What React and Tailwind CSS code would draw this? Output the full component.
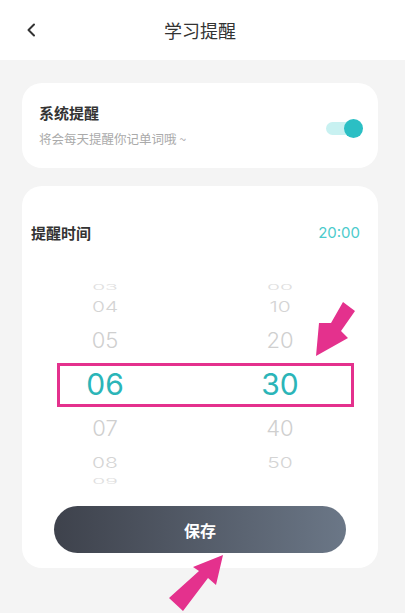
import React from "react";

const sans = { fontFamily: '"Noto Sans CJK SC", "Noto Sans", sans-serif' };
const num = { fontFamily: 'Inter, "Noto Sans", sans-serif' };

function Row({ h, m, height, size, color, scale, weight = "font-light" }) {
  return (
    <div className={`flex items-center ${height}`}>
      <div className={`ml-[23px] w-[120px] flex justify-center ${size} ${color} ${weight}`} style={num}>
        <span className={`inline-block leading-none ${scale}`}>{h}</span>
      </div>
      <div className={`ml-[55px] w-[120px] flex justify-center ${size} ${color} ${weight}`} style={num}>
        <span className={`inline-block leading-none ${scale}`}>{m}</span>
      </div>
    </div>
  );
}

export default function App() {
  return (
    <div className="relative w-[405px] h-[613px] overflow-hidden bg-[#f4f4f4]" style={sans}>
      {/* Header */}
      <div className="h-[60px] bg-white flex items-center relative">
        <div className="w-[60px] h-full flex items-center pl-[26px]">
          <svg width="10" height="14" viewBox="0 0 10 14" fill="none">
            <path d="M8 1.5 L2.5 7 L8 12.5" stroke="#333" strokeWidth="2" strokeLinecap="round" strokeLinejoin="round" />
          </svg>
        </div>
        <div className="flex-1 text-center text-[18px] text-[#333] -ml-[60px] pr-[5px]">学习提醒</div>
      </div>

      {/* Card 1 */}
      <div className="ml-[22px] mr-[27px] mt-[23px] bg-white rounded-[20px] pt-[20px] pb-[20px] pl-[17px] pr-[15px] flex items-center">
        <div className="flex-1">
          <div className="h-[20px] leading-[20px] text-[15px] font-bold text-[#333]">系统提醒</div>
          <div className="mt-[7px] h-[18px] leading-[18px] text-[12.5px] text-[#aaa]">将会每天提醒你记单词哦 ~</div>
        </div>
        <div className="flex items-center mt-[6px]">
          <div className="w-[26px] h-[13px] rounded-full bg-[#c8f1f1] -mr-[8px]" />
          <div className="w-[19px] h-[19px] rounded-full bg-[#2bbfc4]" />
        </div>
      </div>

      {/* Card 2 */}
      <div className="ml-[22px] mr-[27px] mt-[18px] bg-white rounded-[20px] pt-[37px] pb-[15px]">
        <div className="flex items-center justify-between pl-[9px] pr-[18px] h-[20px]">
          <div className="text-[15px] font-bold text-[#333]">提醒时间</div>
          <div className="text-[15px] text-[#4ccbcc]" style={num}>20:00</div>
        </div>

        <div className="mt-[37px] flex flex-col">
          <Row h="03" m="00" height="h-[14px]" size="text-[21px]" color="text-[#dedede]" scale="scale-y-[0.35]" />
          <Row h="04" m="10" height="h-[24px]" size="text-[21px]" color="text-[#d4d4d4]" scale="scale-y-[0.7]" />
          <Row h="05" m="20" height="h-[44px]" size="text-[22px]" color="text-[#cfcfcf]" scale="scale-y-[0.95]" />
          <Row h="06" m="30" height="h-[44px]" size="text-[30px]" color="text-[#2bb5b8]" scale="" weight="font-normal" />
          <Row h="07" m="40" height="h-[44px]" size="text-[22px]" color="text-[#cfcfcf]" scale="scale-y-[0.95]" />
          <Row h="08" m="50" height="h-[24px]" size="text-[21px]" color="text-[#d4d4d4]" scale="scale-y-[0.7]" />
          <Row h="09" m="" height="h-[14px]" size="text-[21px]" color="text-[#dedede]" scale="scale-y-[0.35]" />
        </div>

        <div className="mt-[18px] mx-[32px] h-[47px] rounded-full bg-gradient-to-r from-[#3e424c] to-[#6b7787] flex items-center justify-center">
          <span className="text-white text-[16px] font-bold">保存</span>
        </div>
      </div>

      {/* Annotation overlay */}
      <svg className="absolute left-0 top-0 pointer-events-none" width="405" height="613" viewBox="0 0 405 613">
        <rect x="58.5" y="364.5" width="294" height="41" fill="none" stroke="#e4318d" strokeWidth="3" />
        <polygon points="343,302 355,311 341,331 348,338 316,356 319,323 331,323" fill="#e4318d" />
        <polygon points="223,555 216,585 208,578 183,611 169,598 199,571 193,567" fill="#e4318d" />
      </svg>
    </div>
  );
}
